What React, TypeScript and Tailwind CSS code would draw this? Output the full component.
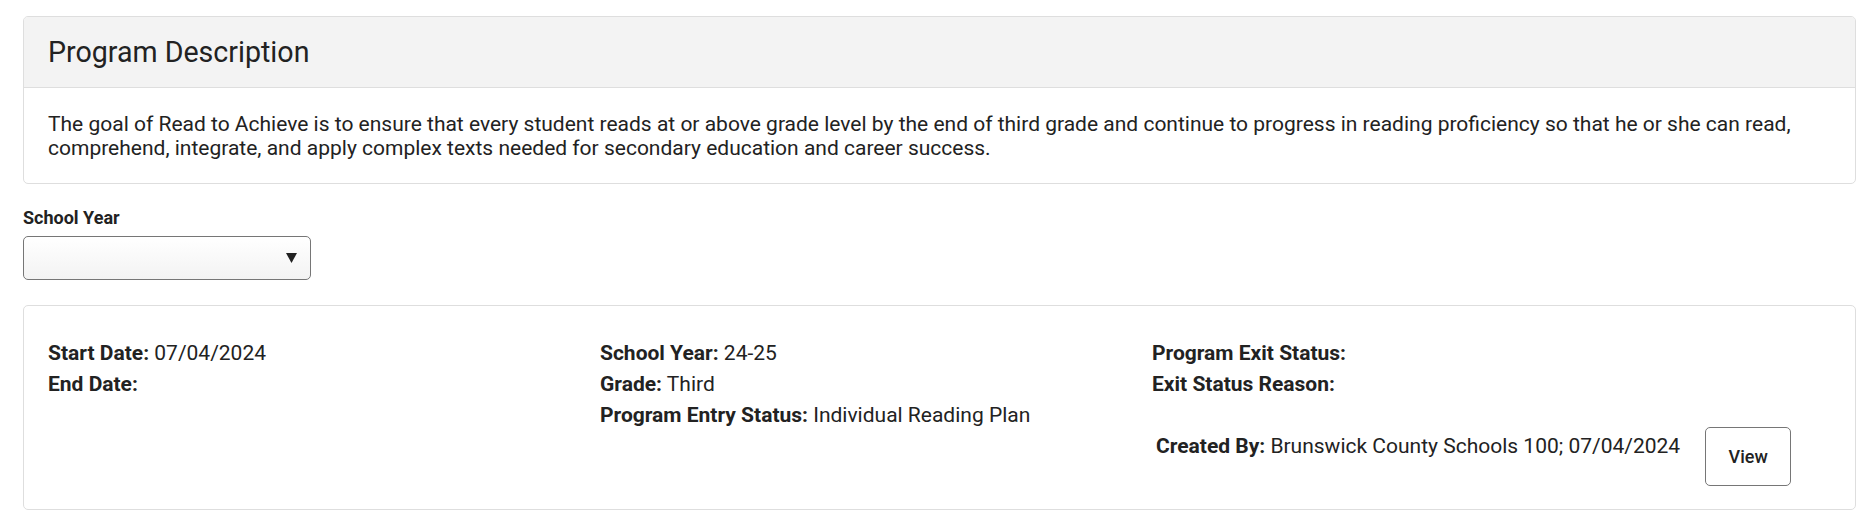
export default function App() {
  return (
    <div className="min-h-screen bg-white pt-[16px] pl-[23px] pr-[7px] font-['Roboto',_'Noto_Sans',_sans-serif] text-[#222]">
      {/* Program description card */}
      <div className="border border-[#dedede] rounded-[5px] overflow-hidden">
        <div className="bg-[#f3f3f3] border-b border-[#dedede] px-6 py-[17px]">
          <h2 className="text-[28.6px] leading-[36px] font-normal">Program Description</h2>
        </div>
        <div className="px-6 pt-6 pb-[23px]">
          <p className="text-[21px] leading-[24px]">
            The goal of Read to Achieve is to ensure that every student reads at or above grade level by the end of
            third grade and continue to progress in reading proficiency so that he or she can read, comprehend,
            integrate, and apply complex texts needed for secondary education and career success.
          </p>
        </div>
      </div>

      {/* School year filter */}
      <label className="block mt-[20px] text-[18px] leading-[27px] font-bold">School Year</label>
      <div className="mt-[5px] w-[288px] h-[44px] border border-[#767676] rounded-[5px] bg-gradient-to-b from-white to-[#f3f3f3] flex items-center justify-end pr-[13px]">
        <svg width="11" height="10" viewBox="0 0 11 10">
          <path d="M0 0 H11 L5.5 10 Z" fill="#222" />
        </svg>
      </div>

      {/* Enrollment card */}
      <div className="mt-[25px] border border-[#dedede] rounded-[5px] px-6 pt-8 pb-[23px]">
        <div className="grid grid-cols-[552px_552px_1fr] text-[21px] leading-[31px]">
          <div>
            <div>
              <span className="font-bold">Start Date:</span> 07/04/2024
            </div>
            <div>
              <span className="font-bold">End Date:</span>
            </div>
          </div>
          <div>
            <div>
              <span className="font-bold">School Year:</span> 24-25
            </div>
            <div>
              <span className="font-bold">Grade:</span> Third
            </div>
            <div>
              <span className="font-bold">Program Entry Status:</span> Individual Reading Plan
            </div>
          </div>
          <div>
            <div>
              <span className="font-bold">Program Exit Status:</span>
            </div>
            <div>
              <span className="font-bold">Exit Status Reason:</span>
            </div>
            <div className="flex items-start mt-[27px]">
              <div className="mt-[4px] pl-[4px]">
                <span className="font-bold">Created By:</span> Brunswick County Schools 100; 07/04/2024
              </div>
              <button className="ml-[25px] w-[86px] h-[59px] border border-[#767676] rounded-[5px] bg-white text-[18px] font-medium text-[#222]">
                View
              </button>
            </div>
          </div>
        </div>
      </div>
    </div>
  );
}
